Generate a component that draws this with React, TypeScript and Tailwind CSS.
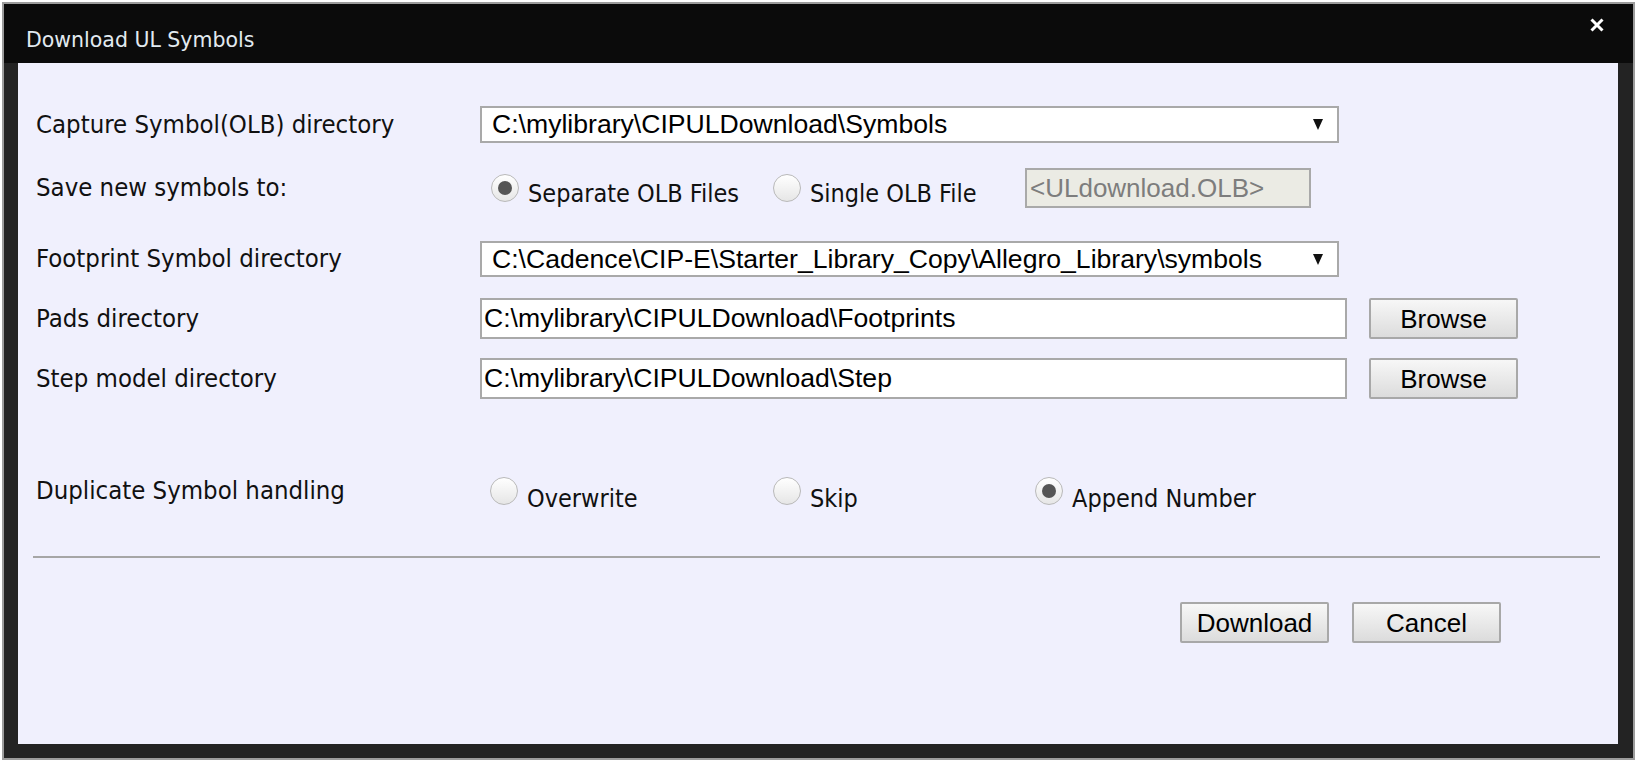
import React from "react";

const label = "w-[444px] shrink-0 font-['DejaVu_Sans_Condensed','DejaVu_Sans',sans-serif] text-[25.5px] leading-none text-[#111]";
const arial = "font-['Liberation_Sans',Arial,sans-serif] text-[26.6px] leading-none text-black";
const btnText = "font-['Liberation_Sans',Arial,sans-serif] text-[26px] leading-none text-black";

function Radio({ checked, text, width, drop }: { checked?: boolean; text: string; width?: string; drop: string }) {
  return (
    <div className={`flex shrink-0 items-center ${width ?? ""}`}>
      <div className="flex h-[28px] w-[28px] items-center justify-center rounded-full border border-[#b9b9b9] bg-linear-to-b from-white to-[#e6e6e6]">
        {checked && <div className="h-[14px] w-[14px] rounded-full bg-[#555]" />}
      </div>
      <span className={`ml-[9px] font-['DejaVu_Sans_Condensed','DejaVu_Sans',sans-serif] text-[25px] leading-none text-[#111] ${drop}`}>
        {text}
      </span>
    </div>
  );
}

function Select({ value }: { value: string }) {
  return (
    <div className="flex h-full w-[859px] items-center justify-between border-2 border-[#a9a9a9] bg-white pl-[10px] pr-[14px]">
      <span className={arial}>{value}</span>
      <svg width="10" height="11" viewBox="0 0 10 11">
        <polygon points="0,0 10,0 5,11" fill="#111" />
      </svg>
    </div>
  );
}

function PathInput({ value }: { value: string }) {
  return (
    <div className="flex h-full items-center">
      <div className="flex h-full w-[867px] items-center border-2 border-[#a9a9a9] bg-white pl-[2px]">
        <span className={arial}>{value}</span>
      </div>
      <Button text="Browse" className="ml-[22px]" />
    </div>
  );
}

function Button({ text, className }: { text: string; className?: string }) {
  return (
    <button
      className={`flex h-[41px] w-[149px] items-center justify-center rounded-[2px] border-2 border-[#a8a8a8] bg-linear-to-b from-[#f7f7f7] to-[#dcdcdc] ${btnText} ${className ?? ""}`}
    >
      {text}
    </button>
  );
}

export default function App() {
  return (
    <div className="h-[762px] w-[1636px] bg-white pl-[2px] pt-[2px]">
      <div className="flex h-[758px] w-[1633px] flex-col border-2 border-[#9c9c9c] bg-[#232323]">
        <div className="flex h-[59px] shrink-0 items-start justify-between bg-[#0b0b0b] pl-[22px] pr-[29px]">
          <span className="pt-[24px] font-['DejaVu_Sans',sans-serif] text-[20.5px] leading-[24px] text-[#e2eaf0]">
            Download UL Symbols
          </span>
          <svg className="mt-[14px]" width="14" height="14" viewBox="0 0 14 14">
            <path d="M1.5 1.5 L12.5 12.5 M12.5 1.5 L1.5 12.5" stroke="#fff" strokeWidth="3" />
          </svg>
        </div>

        <div className="flex-1 pb-[14px] pl-[14px] pr-[15px]">
          <div className="h-full bg-[#f0f0fd] px-[18px] pt-[43px]">
            <div className="flex h-[37px] items-center">
              <div className={label}>Capture Symbol(OLB) directory</div>
              <Select value="C:\mylibrary\CIPULDownload\Symbols" />
            </div>

            <div className="mt-[25px] flex h-[40px] items-center">
              <div className={label}>Save new symbols to:</div>
              <div className="flex h-full items-center pl-[11px]">
                <Radio checked text="Separate OLB Files" width="w-[282px]" drop="mt-[10px]" />
                <Radio text="Single OLB File" width="w-[252px]" drop="mt-[10px]" />
                <div className="flex h-full w-[286px] items-center border-2 border-[#a9a9a9] bg-[#ebebe4] pl-[3px]">
                  <span className="font-['Liberation_Sans',Arial,sans-serif] text-[26px] leading-none text-[#7d7d7d]">
                    &lt;ULdownload.OLB&gt;
                  </span>
                </div>
              </div>
            </div>

            <div className="mt-[33px] flex h-[36px] items-center">
              <div className={label}>Footprint Symbol directory</div>
              <Select value="C:\Cadence\CIP-E\Starter_Library_Copy\Allegro_Library\symbols" />
            </div>

            <div className="mt-[21px] flex h-[41px] items-center">
              <div className={label}>Pads directory</div>
              <PathInput value="C:\mylibrary\CIPULDownload\Footprints" />
            </div>

            <div className="mt-[19px] flex h-[41px] items-center">
              <div className={label}>Step model directory</div>
              <PathInput value="C:\mylibrary\CIPULDownload\Step" />
            </div>

            <div className="mt-[72px] flex h-[40px] items-center">
              <div className={label}>Duplicate Symbol handling</div>
              <div className="flex h-full items-center pl-[10px]">
                <Radio text="Overwrite" width="w-[283px]" drop="mt-[14px]" />
                <Radio text="Skip" width="w-[262px]" drop="mt-[14px]" />
                <Radio checked text="Append Number" drop="mt-[14px]" />
              </div>
            </div>

            <div className="-ml-[3px] mt-[45px] h-[2px] w-[1567px] bg-[#a6a6a6]" />

            <div className="mr-[99px] mt-[44px] flex justify-end gap-[23px]">
              <Button text="Download" />
              <Button text="Cancel" />
            </div>
          </div>
        </div>
      </div>
    </div>
  );
}
